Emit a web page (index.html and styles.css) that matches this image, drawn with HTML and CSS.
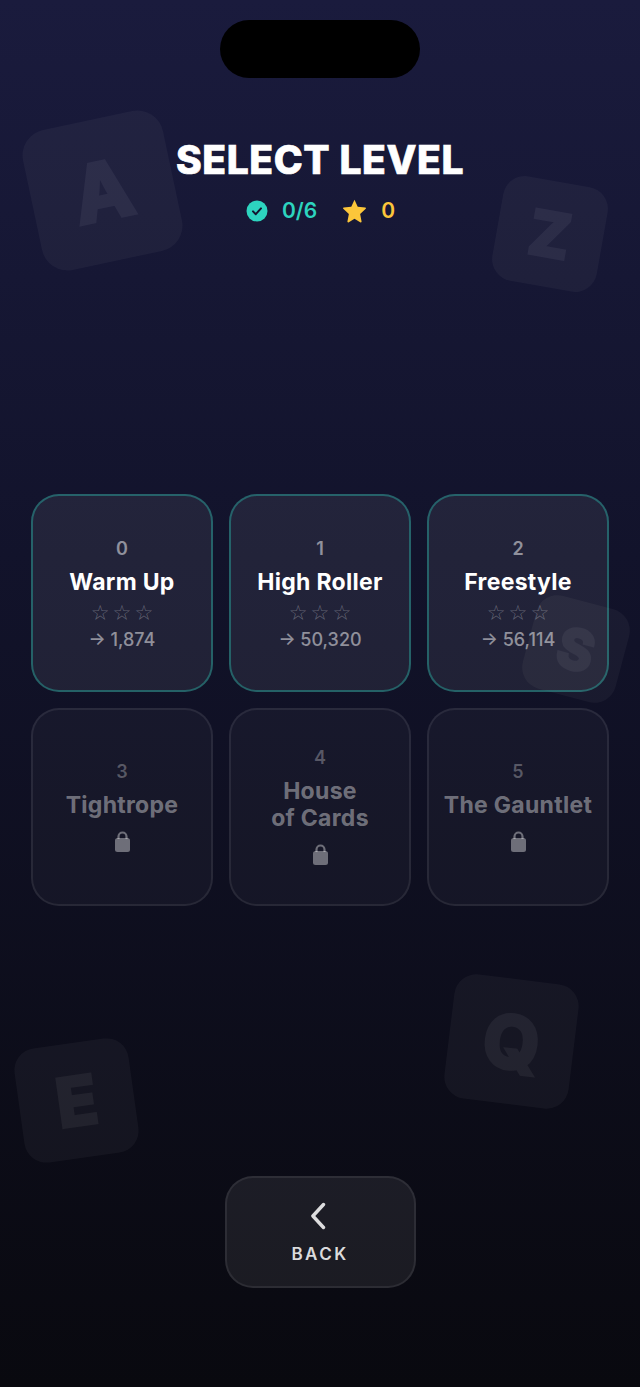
FILE: index.html
```html
<!DOCTYPE html>
<html lang="en">
<head>
    <meta charset="UTF-8">
    <meta name="viewport" content="width=device-width, initial-scale=1.0">
    <title>Select Level</title>
    <link rel="stylesheet" href="styles.css">
</head>
<body>
    <!-- decorative letter tiles behind everything -->
    <div class="tile tile-a">A</div>
    <div class="tile tile-z">Z</div>
    <div class="tile tile-s">S</div>
    <div class="tile tile-e">E</div>
    <div class="tile tile-q">Q</div>

    <div class="island"></div>

    <div class="screen">
        <header class="header">
            <h1 class="title">SELECT LEVEL</h1>
            <div class="stats">
                <span class="stat stat-done">
                    <svg class="stat-icon" viewBox="0 0 22 22"><circle cx="11" cy="11" r="10.5" fill="#2dd4bf"/><path d="M7 11.4l2.8 2.8L15 8.4" fill="none" stroke="#14152e" stroke-width="2" stroke-linecap="round" stroke-linejoin="round"/></svg>
                    0/6
                </span>
                <span class="stat stat-stars">
                    <svg class="stat-icon" viewBox="0 0 24 24"><path d="M12 1.6l3.1 6.7 7.3.9c.6.1.8.8.4 1.2l-5.4 5 1.4 7.2c.1.6-.5 1-1 .8L12 19.8l-5.8 3.6c-.5.3-1.1-.2-1-.8l1.4-7.2-5.4-5c-.4-.4-.2-1.1.4-1.2l7.3-.9L12 1.600z" fill="#fcc63a"/></svg>
                    0
                </span>
            </div>
        </header>

        <main class="levels">
            <div class="level">
                <div class="level-num">0</div>
                <div class="level-name">Warm Up</div>
                <div class="level-stars">☆☆☆</div>
                <div class="level-score">→ 1,874</div>
            </div>
            <div class="level">
                <div class="level-num">1</div>
                <div class="level-name">High Roller</div>
                <div class="level-stars">☆☆☆</div>
                <div class="level-score">→ 50,320</div>
            </div>
            <div class="level">
                <div class="level-num">2</div>
                <div class="level-name">Freestyle</div>
                <div class="level-stars">☆☆☆</div>
                <div class="level-score">→ 56,114</div>
            </div>
            <div class="level locked">
                <div class="level-num">3</div>
                <div class="level-name">Tightrope</div>
                <svg class="lock" viewBox="0 0 15 21"><path d="M3.500 8V5.500a4 4 0 0 1 8 0V8" fill="none" stroke="currentColor" stroke-width="2.200"/><rect y="7" width="15" height="14" rx="2.500" fill="currentColor"/></svg>
            </div>
            <div class="level locked">
                <div class="level-num">4</div>
                <div class="level-name">House<br>of Cards</div>
                <svg class="lock" viewBox="0 0 15 21"><path d="M3.500 8V5.500a4 4 0 0 1 8 0V8" fill="none" stroke="currentColor" stroke-width="2.200"/><rect y="7" width="15" height="14" rx="2.500" fill="currentColor"/></svg>
            </div>
            <div class="level locked">
                <div class="level-num">5</div>
                <div class="level-name">The Gauntlet</div>
                <svg class="lock" viewBox="0 0 15 21"><path d="M3.500 8V5.500a4 4 0 0 1 8 0V8" fill="none" stroke="currentColor" stroke-width="2.200"/><rect y="7" width="15" height="14" rx="2.500" fill="currentColor"/></svg>
            </div>
        </main>

        <footer class="footer">
            <button class="back">
                <svg class="back-icon" viewBox="0 0 18 28"><path d="M12.500 2.500L1.900 14 12.500 25.500" fill="none" stroke="currentColor" stroke-width="3.400" stroke-linecap="round" stroke-linejoin="round"/></svg>
                <span>BACK</span>
            </button>
        </footer>
    </div>
</body>
</html>
```

FILE: styles.css
```css
* {
    box-sizing: border-box;
    font-family: 'Inter', 'Liberation Sans', sans-serif;
}

html, body {
    height: 100%;
}

body {
    position: relative;
    margin: 0;
    overflow: hidden;
    color: #fff;
    background: linear-gradient(180deg, #1a1b3d 0%, #12132b 40%, #09090f 100%);
}

.island {
    position: absolute;
    top: 20px;
    left: 220px;
    width: 200px;
    height: 58px;
    border-radius: 29px;
    background: #000;
}

/* background tiles */
.tile {
    position: absolute;
    display: flex;
    justify-content: center;
    align-items: center;
    border-radius: 22px;
    background: rgba(255, 255, 255, 0.42);
    color: #fff;
    font-weight: 700;
    -webkit-text-stroke: 4px #fff;
    opacity: 0.09;
}

.tile-a {
    top: 119px;
    left: 31px;
    width: 143px;
    height: 143px;
    font-size: 78px;
    border-radius: 26px;
    transform: rotate(-12deg);
}

.tile-z {
    top: 181px;
    left: 497px;
    width: 106px;
    height: 106px;
    font-size: 60px;
    transform: rotate(10deg);
}

.tile-s {
    top: 601px;
    left: 528px;
    width: 96px;
    height: 96px;
    font-size: 54px;
    transform: rotate(15deg);
}

.tile-e {
    top: 1043px;
    left: 19px;
    width: 115px;
    height: 115px;
    font-size: 66px;
    transform: rotate(-8deg);
}

.tile-q {
    top: 979px;
    left: 449px;
    width: 125px;
    height: 125px;
    font-size: 72px;
    transform: rotate(7deg);
}

.screen {
    position: relative;
    display: flex;
    flex-direction: column;
    height: 100%;
    padding: 0 31px;
}

.header {
    padding-top: 137px;
    text-align: center;
}

.title {
    margin: 0;
    font-size: 39px;
    font-weight: 800;
    line-height: 46px;
    letter-spacing: 0.6px;
    -webkit-text-stroke: 0.7px #fff;
}

.stats {
    display: flex;
    justify-content: center;
    gap: 25px;
    margin-top: 4px;
    padding-left: 1px;
    font-size: 21px;
    font-weight: 600;
    line-height: 48px;
    height: 48px;
}

.stat {
    display: flex;
    align-items: center;
    gap: 14px;
}

.stat-done {
    color: #2dd4bf;
}

.stat-stars {
    color: #fcc63a;
}

.stat-icon {
    width: 22px;
    height: 22px;
}

.stat-stars .stat-icon {
    width: 25px;
    height: 25px;
    margin-top: -2px;
}

/* level grid */
.levels {
    display: grid;
    grid-template-columns: repeat(3, 1fr);
    grid-auto-rows: 198px;
    gap: 16px;
    margin-top: 259px;
}

.level {
    display: flex;
    flex-direction: column;
    align-items: center;
    justify-content: center;
    padding-top: 2px;
    border: 2px solid rgba(45, 212, 191, 0.36);
    border-radius: 28px;
    background: rgba(255, 255, 255, 0.07);
    text-align: center;
}

.level-num {
    font-size: 18px;
    font-weight: 600;
    line-height: 24px;
    color: rgba(255, 255, 255, 0.5);
}

.level-name {
    margin-top: 8px;
    font-size: 23px;
    font-weight: 700;
    line-height: 27px;
    letter-spacing: 0.3px;
}

.level-stars {
    margin-top: 4px;
    font-size: 21px;
    line-height: 26px;
    letter-spacing: 3px;
    margin-right: -3px;
    color: rgba(255, 255, 255, 0.3);
    font-family: 'DejaVu Sans', sans-serif;
}

.level-score {
    margin-top: 2px;
    font-size: 18px;
    font-weight: 500;
    line-height: 24px;
    color: rgba(255, 255, 255, 0.5);
}

.locked {
    padding-bottom: 5px;
    border-color: rgba(255, 255, 255, 0.08);
    background: rgba(255, 255, 255, 0.03);
}

.locked .level-num {
    color: rgba(255, 255, 255, 0.28);
}

.locked .level-name {
    color: rgba(255, 255, 255, 0.4);
}

.lock {
    width: 15px;
    height: 21px;
    margin-top: 12px;
    color: rgba(255, 255, 255, 0.38);
}

/* back button */
.footer {
    display: flex;
    justify-content: center;
    margin-top: 270px;
}

.back {
    display: flex;
    flex-direction: column;
    align-items: center;
    justify-content: center;
    gap: 14px;
    width: 191px;
    height: 112px;
    padding-top: 2px;
    border: 2px solid rgba(255, 255, 255, 0.08);
    border-radius: 28px;
    background: rgba(255, 255, 255, 0.07);
    color: rgba(255, 255, 255, 0.85);
    font-size: 17px;
    font-weight: 600;
    letter-spacing: 2.4px;
}

.back-icon {
    width: 18px;
    height: 28px;
}
```
